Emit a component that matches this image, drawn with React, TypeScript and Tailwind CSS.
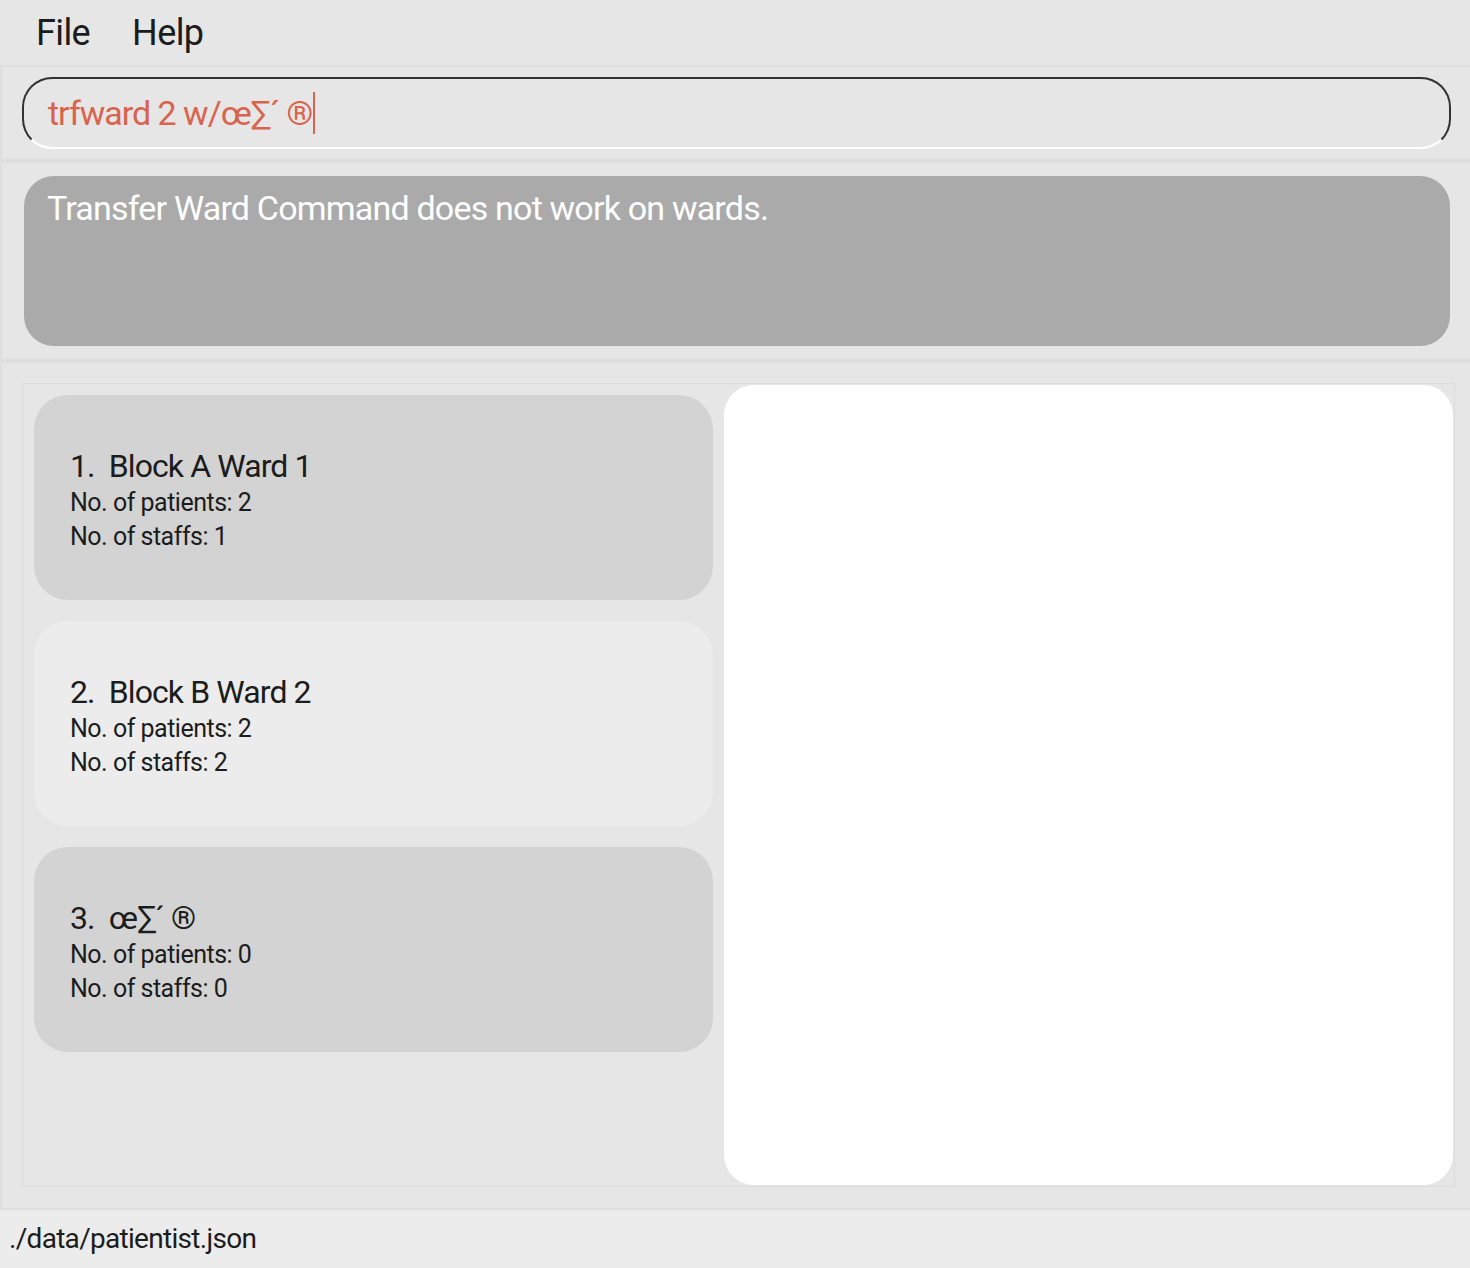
import React from "react";

const wards = [
  { n: 1, name: "Block A Ward 1", patients: 2, staffs: 1, bg: "bg-[#d3d3d3]" },
  { n: 2, name: "Block B Ward 2", patients: 2, staffs: 2, bg: "bg-[#ececec]" },
  { n: 3, name: "œ∑´ ®", patients: 0, staffs: 0, bg: "bg-[#d3d3d3]" },
];

export default function App() {
  return (
    <div
      className="w-[1470px] h-[1268px] flex flex-col bg-[#e6e6e6] text-[#1c1c1c] overflow-hidden"
      style={{ fontFamily: "Roboto, 'Liberation Sans', sans-serif" }}
    >
      {/* menu bar */}
      <div className="h-[67px] flex items-center gap-[42px] pl-[36px] text-[36px] tracking-[-0.6px] border-b-2 border-[#dedede]">
        <span>File</span>
        <span>Help</span>
      </div>

      {/* command box */}
      <div className="h-[92px] pl-[20px] pt-[10px] border-l-2 border-[#dedede]">
        <div className="h-[72px] w-[1429px] rounded-[30px] border-2 border-[#333333] border-b-white flex items-center pl-[24px] text-[34px] text-[#d9634d] tracking-[-1px]">
          <span>trfward 2 w/œ∑´ ®</span>
          <span className="inline-block w-[2px] h-[42px] bg-[#d9634d] ml-[1px]"></span>
        </div>
      </div>
      <div className="h-[4px] bg-[#dedede]"></div>

      {/* result box */}
      <div className="h-[196px] pl-[22px] pt-[13px] border-l-2 border-[#dedede]">
        <div className="h-[170px] w-[1426px] rounded-[30px] bg-[#aaaaaa] px-[23px] pt-[9px] text-[34px] text-white tracking-[-0.8px] leading-[46px]">
          Transfer Ward Command does not work on wards.
        </div>
      </div>
      <div className="h-[4px] bg-[#dedede]"></div>

      {/* list area */}
      <div className="flex-1 pl-[20px] pt-[20px] pb-[21px] border-l-2 border-[#dedede]">
        <div className="h-full w-[1433px] border border-[#dcdcdc] flex">
          <div className="w-[701px] pl-[11px] pt-[11px] flex flex-col gap-[21px]">
            {wards.map((w) => (
              <div
                key={w.n}
                className={`h-[205px] w-[679px] rounded-[34px] ${w.bg} pl-[36px] pt-[51px]`}
              >
                <div className="text-[32px] leading-[40px] tracking-[-0.9px]">
                  {w.n}.&nbsp;&nbsp;{w.name}
                </div>
                <div className="text-[25px] leading-[34px] tracking-[-0.5px]">
                  No. of patients: {w.patients}
                </div>
                <div className="text-[25px] leading-[34px] tracking-[-0.5px]">
                  No. of staffs: {w.staffs}
                </div>
              </div>
            ))}
          </div>
          <div className="flex-1 mt-[1px] mb-[1px] mr-[1px] rounded-[30px] bg-white"></div>
        </div>
      </div>

      {/* status bar */}
      <div className="h-[60px] bg-[#ececec] border-t-2 border-[#dedede] flex items-center pl-[9px] text-[28px] tracking-[-0.7px]">
        ./data/patientist.json
      </div>
    </div>
  );
}
